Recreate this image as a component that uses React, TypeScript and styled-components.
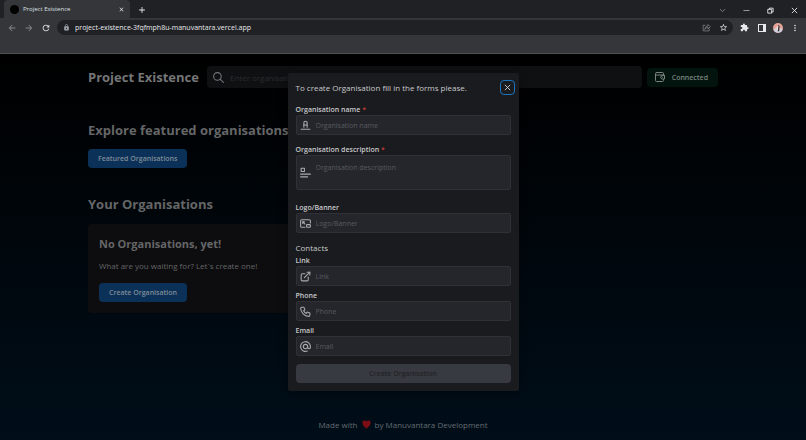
import React from "react";
import styled, { createGlobalStyle } from "styled-components";
import {
  MdArrowBack,
  MdArrowForward,
  MdRefresh,
  MdLock,
  MdStarBorder,
  MdExtension,
  MdMoreVert,
  MdClose,
  MdAdd,
} from "react-icons/md";

const GlobalStyle = createGlobalStyle`
  *, *::before, *::after { box-sizing: border-box; }
  body { margin: 0; background: #000; }
  body, button, input, textarea { font-family: "Open Sans", "Noto Sans", sans-serif; }
  h1, h2, h3, p { margin: 0; }
  button { padding: 0; border: 0; background: none; color: inherit; cursor: pointer; }
`;

const Window = styled.div`
  display: flex;
  flex-direction: column;
  min-height: 100vh;
`;

/* Browser frame */

const TabStrip = styled.div`
  display: flex;
  align-items: flex-end;
  height: 18px;
  padding: 0 7px 0 4px;
  background: #202124;
  color: #dfe1e5;
`;

const Tab = styled.div`
  display: flex;
  align-items: center;
  gap: 4px;
  width: 126px;
  height: 18px;
  padding: 0 5px 0 6px;
  border-radius: 4px 4px 0 0;
  background: #35363a;
  font-size: 6px;
`;

const Favicon = styled.span`
  width: 9px;
  height: 9px;
  border-radius: 50%;
  background: #000;
`;

const TabTitle = styled.span`
  flex: 1;
`;

const ChromeButton = styled.button<{ $dim?: boolean; $w?: number }>`
  display: flex;
  align-items: center;
  justify-content: center;
  flex: none;
  width: ${(p) => p.$w ?? 10}px;
  height: 16px;
  color: ${(p) => (p.$dim ? "#85878b" : "#e8eaed")};
`;

const NewTab = styled(ChromeButton)`
  margin-left: 7px;
`;

const WindowControls = styled.div`
  display: flex;
  gap: 14px;
  margin-left: auto;
`;

const Toolbar = styled.div`
  display: flex;
  align-items: center;
  height: 19px;
  padding: 0 6px;
  background: #35363a;
`;

const NavGroup = styled.div`
  display: flex;
  gap: 5px;
  margin-right: 5px;
`;

const AddressBar = styled.div`
  display: flex;
  align-items: center;
  gap: 5px;
  flex: 1;
  height: 15px;
  padding: 0 5px 0 6px;
  border-radius: 8px;
  background: #202124;
  color: #9aa0a6;
`;

const Address = styled.input`
  flex: 1;
  min-width: 0;
  padding: 0;
  border: 0;
  outline: 0;
  background: none;
  color: #e8eaed;
  font-size: 7px;
`;

const ActionGroup = styled.div`
  display: flex;
  gap: 7px;
`;

const PageActions = styled(ActionGroup)`
  color: #c4c7cb;
`;

const BrowserActions = styled(ActionGroup)`
  margin-left: 6px;
`;

const BookmarkBar = styled.div`
  height: 17px;
  border-bottom: 1px solid #505154;
  background: #35363a;
`;

/* Page */

const Page = styled.div`
  position: relative;
  display: flex;
  flex: 1;
  flex-direction: column;
  background: linear-gradient(#000 0%, #00060b 45%, #000e19 100%);
  color: #686969;
`;

const Container = styled.div`
  width: 100%;
  max-width: 630px;
  margin: 0 auto;
`;

const Header = styled.header`
  display: flex;
  align-items: center;
  height: 22px;
  margin-top: 12px;
`;

const Brand = styled.h1`
  margin-right: 8px;
  color: #757677;
  font-size: 13px;
  font-weight: 700;
  line-height: 20px;
  white-space: nowrap;
`;

const SearchBox = styled.label`
  display: flex;
  align-items: center;
  gap: 5px;
  flex: 1;
  height: 22px;
  margin-right: 5px;
  padding: 0 5px;
  border-radius: 4px;
  background: #0f1012;
  color: #747578;
`;

const SearchInput = styled.input`
  flex: 1;
  min-width: 0;
  padding: 0;
  border: 0;
  outline: 0;
  background: none;
  color: #717273;
  font-size: 8px;
  &::placeholder { color: #2b2c2f; opacity: 1; }
`;

const Connected = styled.button`
  display: flex;
  align-items: center;
  gap: 6px;
  height: 19px;
  padding: 0 10px 0 7px;
  border-radius: 4px;
  background: #02140d;
  color: #7a837f;
  font-size: 7px;
  font-weight: 600;
`;

const Section = styled.section<{ $top: number }>`
  margin-top: ${(p) => p.$top}px;
`;

const SectionTitle = styled.h2`
  color: #656667;
  font-size: 13px;
  font-weight: 700;
  line-height: 20px;
`;

const PrimaryButton = styled.button`
  height: 19px;
  padding: 0 10px;
  border-radius: 4px;
  background: #0b3158;
  color: #808b97;
  font-size: 7px;
  font-weight: 600;
`;

const FeaturedButton = styled(PrimaryButton)`
  display: block;
  margin-top: 9px;
`;

const Card = styled.div`
  display: flex;
  flex-direction: column;
  align-items: flex-start;
  width: 50%;
  margin-top: 10px;
  padding: 11px;
  border-radius: 4px;
  background: #0d0d0f;
`;

const CardTitle = styled.h3`
  color: #656667;
  font-size: 11px;
  font-weight: 700;
  line-height: 17px;
`;

const CardText = styled.p`
  margin: 7px 0 11px;
  color: #646567;
  font-size: 8px;
  line-height: 13px;
`;

const Footer = styled.footer`
  display: flex;
  align-items: center;
  justify-content: center;
  gap: 4px;
  margin-top: auto;
  padding-bottom: 9px;
  color: #656b72;
  font-size: 8px;
  line-height: 13px;
`;

/* Dialog */

const Overlay = styled.div`
  position: absolute;
  inset: 0;
  display: flex;
  align-items: flex-start;
  justify-content: center;
  padding-top: 19px;
`;

const Dialog = styled.form`
  width: 231px;
  padding: 8px;
  border-radius: 2px;
  background: #1a1b1e;
  color: #c8c9cc;
  box-shadow: 0 2px 10px rgba(0, 0, 0, 0.3);
`;

const DialogHeader = styled.div`
  display: flex;
  align-items: center;
  justify-content: space-between;
  height: 13px;
  margin: 0 -4px 11px 0;
`;

const DialogTitle = styled.h2`
  font-size: 8px;
  font-weight: 400;
`;

const CloseButton = styled.button`
  display: flex;
  align-items: center;
  justify-content: center;
  width: 15px;
  height: 15px;
  border: 1px solid #1c74c0;
  border-radius: 4px;
  color: #dcdde0;
`;

const Field = styled.div<{ $gap: number }>`
  margin-bottom: ${(p) => p.$gap}px;
`;

const Label = styled.label`
  display: block;
  font-size: 7px;
  font-weight: 600;
  line-height: 10px;
`;

const Required = styled.span`
  color: #c23a3c;
`;

const Control = styled.div<{ $tall?: boolean }>`
  display: flex;
  align-items: center;
  gap: 4px;
  height: ${(p) => (p.$tall ? 35 : 20)}px;
  padding-left: 2px;
  border: 1px solid #303137;
  border-radius: 2px;
  background: #25262b;
  color: #a9aaae;
`;

const TextInput = styled.input`
  flex: 1;
  min-width: 0;
  height: 100%;
  padding: 0;
  border: 0;
  outline: 0;
  background: none;
  color: #c1c2c5;
  font-size: 7px;
  &::placeholder { color: #585a60; opacity: 1; }
`;

const TextArea = styled(TextInput)`
  padding-top: 6px;
  line-height: 11px;
  resize: none;
`;

const GroupTitle = styled.h3`
  margin-bottom: 2px;
  font-size: 8px;
  font-weight: 400;
  line-height: 12px;
`;

const SubmitButton = styled.button`
  display: block;
  width: 100%;
  height: 19px;
  margin-top: 8px;
  border-radius: 4px;
  background: #373a40;
  color: #222327;
  font-size: 7px;
  font-weight: 600;
`;

type IconProps = { paths: string[]; size?: number; stroke?: number };

const Icon = ({ paths, size = 13, stroke = 2 }: IconProps) => (
  <svg
    width={size}
    height={size}
    viewBox="0 0 24 24"
    fill="none"
    stroke="currentColor"
    strokeWidth={stroke}
    strokeLinecap="round"
    strokeLinejoin="round"
    aria-hidden="true"
  >
    {paths.map((d) => (
      <path key={d} d={d} />
    ))}
  </svg>
);

const icons = {
  textColor: ["M9 15v-8a3 3 0 0 1 6 0v8", "M9 11h6", "M4 19h16"],
  description: ["M4 4h6v6h-6z", "M3 15h18", "M3 20h13"],
  banner: [
    "M11 19h-6a2 2 0 0 1 -2 -2v-10a2 2 0 0 1 2 -2h14a2 2 0 0 1 2 2v4",
    "M14 15a1 1 0 0 1 1 -1h5a1 1 0 0 1 1 1v3a1 1 0 0 1 -1 1h-5a1 1 0 0 1 -1 -1z",
    "M7 9l4 4",
    "M7 12v-3h3",
  ],
  link: [
    "M11 7h-5a2 2 0 0 0 -2 2v9a2 2 0 0 0 2 2h9a2 2 0 0 0 2 -2v-5",
    "M10 14l10 -10",
    "M15 4h5v5",
  ],
  phone: [
    "M5 4h4l2 5l-2.5 1.5a11 11 0 0 0 5 5l1.5 -2.5l5 2v4a2 2 0 0 1 -2 2a16 16 0 0 1 -15 -15a2 2 0 0 1 2 -2",
  ],
  at: [
    "M8 12a4 4 0 1 0 8 0a4 4 0 1 0 -8 0",
    "M16 12v1.5a2.5 2.5 0 0 0 5 0v-1.5a9 9 0 1 0 -5.5 8.3",
  ],
  search: ["M3 10a7 7 0 1 0 14 0a7 7 0 1 0 -14 0", "M21 21l-6 -6"],
  wallet: [
    "M5 3h12a2 2 0 0 1 2 2v3M19 17v2a2 2 0 0 1 -2 2h-12a2 2 0 0 1 -2 -2v-14a2 2 0 0 1 2 -2",
    "M3 8h16",
    "M21 9v7h-4a3.5 3.5 0 0 1 0 -7z",
    "M17 12.5h.01",
  ],
  chevron: ["M4 8l8 8l8 -8"],
  minimize: ["M3 12h18"],
  restore: ["M4 8h12v13h-12z", "M8 8v-4h13v13h-5"],
  close: ["M4 4l16 16", "M20 4l-16 16"],
  share: ["M8 6h-5v15h16v-5", "M8 16c0-6 4-8 8-8v-4l6 6l-6 6v-4c-4 0-6 1-8 4z"],
};

const SidePanelIcon = () => (
  <svg width="9" height="9" viewBox="0 0 9 9" aria-hidden="true">
    <path fill="currentColor" fillRule="evenodd" d="M1 1h8v8h-8zM2 2v6h4v-6z" />
  </svg>
);

const AvatarIcon = () => (
  <svg width="12" height="12" viewBox="0 0 24 24" aria-hidden="true">
    <circle cx="12" cy="12" r="12" fill="#e5a497" />
    <path d="M1 16a12 12 0 0 0 22 0l-5-4h-12z" fill="#cdd0da" />
    <path d="M10 8q4-5 6 0l-1 10-3 3z" fill="#3a2b30" />
    <path d="M9 9q2-4 4-1l-1 7-3 3z" fill="#f3e1dc" />
  </svg>
);

const HeartIcon = () => (
  <svg width="9" height="9" viewBox="0 0 24 24" aria-hidden="true">
    <path
      fill="#7c0d14"
      d="M12 23C5 17 1 13 1 8a6 6 0 0 1 11-4a6 6 0 0 1 11 4c0 5-4 9-11 15z"
    />
  </svg>
);

type FormFieldProps = {
  id: string;
  label: string;
  icon: string[];
  gap: number;
  required?: boolean;
  multiline?: boolean;
};

const FormField = ({ id, label, icon, gap, required, multiline }: FormFieldProps) => (
  <Field $gap={gap}>
    <Label htmlFor={id}>
      {label}
      {required && <Required> *</Required>}
    </Label>
    <Control $tall={multiline}>
      <Icon paths={icon} />
      {multiline ? (
        <TextArea as="textarea" id={id} placeholder={label} />
      ) : (
        <TextInput id={id} placeholder={label} />
      )}
    </Control>
  </Field>
);

export default function App() {
  return (
    <Window>
      <GlobalStyle />
      <TabStrip>
        <Tab>
          <Favicon />
          <TabTitle>Project Existence</TabTitle>
          <ChromeButton $w={7} aria-label="Close tab"><MdClose size={7} /></ChromeButton>
        </Tab>
        <NewTab aria-label="New tab"><MdAdd size={10} /></NewTab>
        <WindowControls>
          <ChromeButton aria-label="Search tabs" $dim><Icon paths={icons.chevron} size={7} stroke={3} /></ChromeButton>
          <ChromeButton aria-label="Minimize"><Icon paths={icons.minimize} size={7} /></ChromeButton>
          <ChromeButton aria-label="Restore"><Icon paths={icons.restore} size={7} stroke={3} /></ChromeButton>
          <ChromeButton aria-label="Close window"><Icon paths={icons.close} size={7} stroke={3} /></ChromeButton>
        </WindowControls>
      </TabStrip>
      <Toolbar>
        <NavGroup>
          <ChromeButton $w={12} $dim aria-label="Back"><MdArrowBack size={10} /></ChromeButton>
          <ChromeButton $w={12} $dim aria-label="Forward"><MdArrowForward size={10} /></ChromeButton>
          <ChromeButton $w={12} aria-label="Reload"><MdRefresh size={10} /></ChromeButton>
        </NavGroup>
        <AddressBar>
          <MdLock size={7} />
          <Address aria-label="Address" defaultValue="project-existence-3fqfmph8u-manuvantara.vercel.app" />
          <PageActions>
            <ChromeButton $dim aria-label="Share"><Icon paths={icons.share} size={9} /></ChromeButton>
            <ChromeButton aria-label="Bookmark"><MdStarBorder size={9} /></ChromeButton>
          </PageActions>
        </AddressBar>
        <BrowserActions>
          <ChromeButton aria-label="Extensions"><MdExtension size={9} /></ChromeButton>
          <ChromeButton aria-label="Side panel"><SidePanelIcon /></ChromeButton>
          <ChromeButton aria-label="Profile"><AvatarIcon /></ChromeButton>
          <ChromeButton aria-label="Menu"><MdMoreVert size={10} /></ChromeButton>
        </BrowserActions>
      </Toolbar>
      <BookmarkBar />

      <Page>
        <Container>
          <Header>
            <Brand>Project Existence</Brand>
            <SearchBox>
              <Icon paths={icons.search} />
              <SearchInput aria-label="Search organisations" placeholder="Enter organisation name" />
            </SearchBox>
            <Connected><Icon paths={icons.wallet} size={12} />Connected</Connected>
          </Header>
          <Section $top={32}>
            <SectionTitle>Explore featured organisations</SectionTitle>
            <FeaturedButton>Featured Organisations</FeaturedButton>
          </Section>
          <Section $top={26}>
            <SectionTitle>Your Organisations</SectionTitle>
            <Card>
              <CardTitle>No Organisations, yet!</CardTitle>
              <CardText>What are you waiting for? Let`s create one!</CardText>
              <PrimaryButton>Create Organisation</PrimaryButton>
            </Card>
          </Section>
        </Container>
        <Footer>
          <span>Made with</span>
          <HeartIcon />
          <span>by Manuvantara Development</span>
        </Footer>

        <Overlay>
          <Dialog role="dialog" aria-labelledby="dialog-title" onSubmit={(e) => e.preventDefault()}>
            <DialogHeader>
              <DialogTitle id="dialog-title">To create Organisation fill in the forms please.</DialogTitle>
              <CloseButton type="button" aria-label="Close"><Icon paths={icons.close} size={7} stroke={3} /></CloseButton>
            </DialogHeader>
            <FormField id="name" label="Organisation name" icon={icons.textColor} gap={10} required />
            <FormField id="description" label="Organisation description" icon={icons.description} gap={13} required multiline />
            <FormField id="logo" label="Logo/Banner" icon={icons.banner} gap={9} />
            <GroupTitle>Contacts</GroupTitle>
            <FormField id="link" label="Link" icon={icons.link} gap={5} />
            <FormField id="phone" label="Phone" icon={icons.phone} gap={5} />
            <FormField id="email" label="Email" icon={icons.at} gap={5} />
            <SubmitButton type="submit" disabled>Create Organisation</SubmitButton>
          </Dialog>
        </Overlay>
      </Page>
    </Window>
  );
}
